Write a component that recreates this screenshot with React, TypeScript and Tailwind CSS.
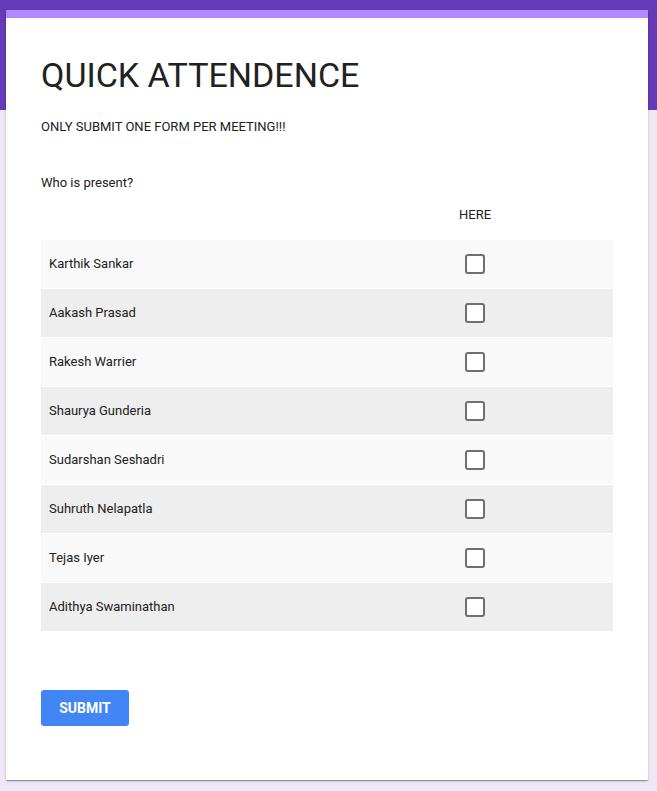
import React from "react";

const members = [
  "Karthik Sankar",
  "Aakash Prasad",
  "Rakesh Warrier",
  "Shaurya Gunderia",
  "Sudarshan Seshadri",
  "Suhruth Nelapatla",
  "Tejas Iyer",
  "Adithya Swaminathan",
];

export default function App() {
  return (
    <div className="min-h-screen bg-[linear-gradient(#673ab7_0_110px,#ede7f6_110px)] pt-[10px] pl-[6px] font-['Roboto','Liberation_Sans',sans-serif] text-[#212121]">
      <div className="w-[642px] bg-white border-t-8 border-[#b388ff] shadow-[0_2px_1px_-1px_rgba(0,0,0,0.2),0_1px_1px_0_rgba(0,0,0,0.14),0_1px_3px_0_rgba(0,0,0,0.12)] px-[35px] pt-[37px] pb-[54px]">
        <h1 className="text-[34px] leading-[40px] font-normal">QUICK ATTENDENCE</h1>
        <p className="mt-[22px] text-[13px] leading-[20px]">ONLY SUBMIT ONE FORM PER MEETING!!!</p>

        <p className="mt-[36px] text-[13px] leading-[20px]">Who is present?</p>

        <div className="mt-[12px] flex text-[13px] leading-[20px]">
          <div className="flex-1" />
          <div className="w-[276px] text-center">HERE</div>
        </div>

        <div className="mt-[15px] flex flex-col gap-px">
          {members.map((name, i) => (
            <div
              key={name}
              className={`flex h-[48px] items-center ${i % 2 === 0 ? "bg-[#f9f9f9]" : "bg-[#eeeeee]"}`}
            >
              <div className="flex-1 pl-[8px] text-[13px]">{name}</div>
              <div className="flex w-[276px] justify-center">
                <div className="h-[20px] w-[20px] rounded-[3px] border-2 border-[#6f6f6f] bg-white" />
              </div>
            </div>
          ))}
        </div>

        <button className="mt-[59px] h-[36px] w-[88px] rounded-[3px] bg-[#4285f4] text-[14px] font-bold text-white">
          SUBMIT
        </button>
      </div>
    </div>
  );
}
